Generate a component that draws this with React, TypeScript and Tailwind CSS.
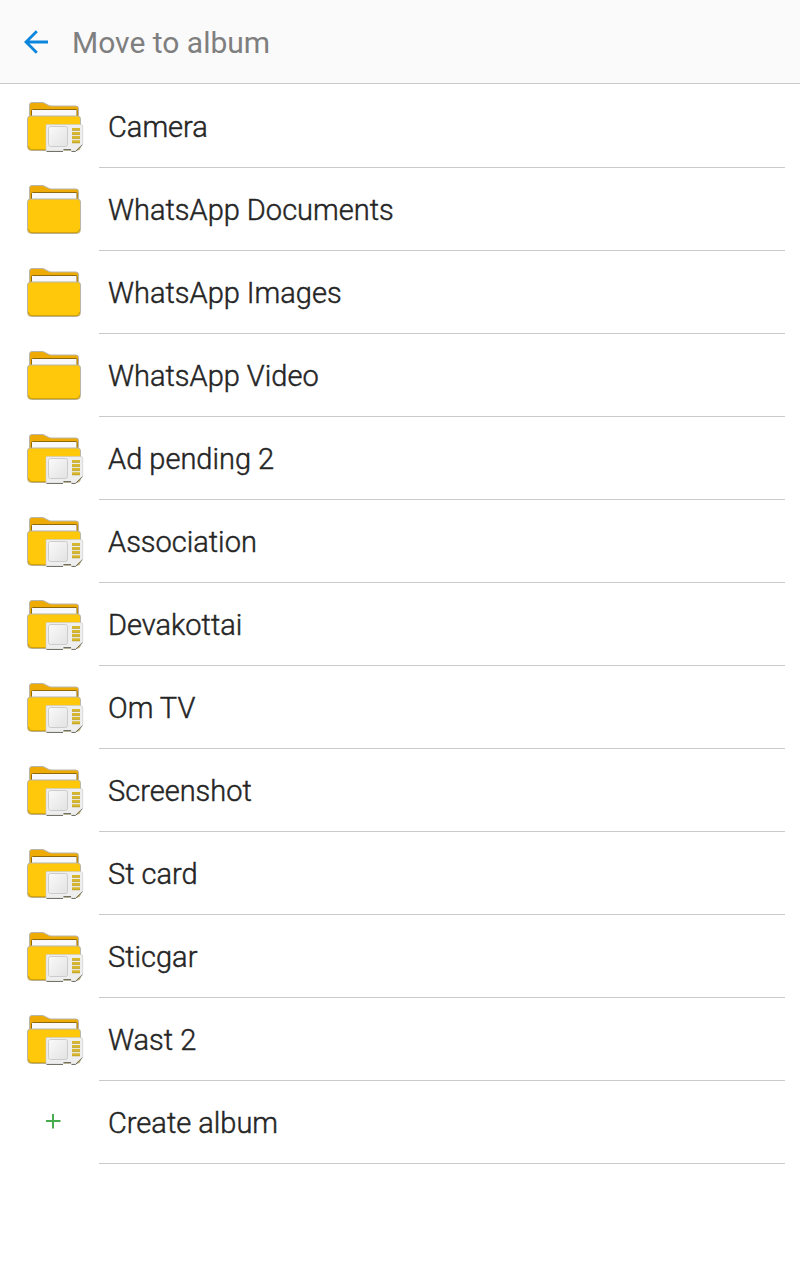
type Album = { name: string; onCard: boolean };

const albums: Album[] = [
  { name: "Camera", onCard: true },
  { name: "WhatsApp Documents", onCard: false },
  { name: "WhatsApp Images", onCard: false },
  { name: "WhatsApp Video", onCard: false },
  { name: "Ad pending 2", onCard: true },
  { name: "Association", onCard: true },
  { name: "Devakottai", onCard: true },
  { name: "Om TV", onCard: true },
  { name: "Screenshot", onCard: true },
  { name: "St card", onCard: true },
  { name: "Sticgar", onCard: true },
  { name: "Wast 2", onCard: true },
];

function FolderIcon({ onCard }: { onCard: boolean }) {
  return (
    <svg width="60" height="54" viewBox="0 0 60 54" fill="none" aria-hidden="true">
      <defs>
        <linearGradient id="card" x1="0" y1="0" x2="1" y2="1">
          <stop offset="0" stopColor="#fafafa" />
          <stop offset="1" stopColor="#e2e2e2" />
        </linearGradient>
      </defs>
      {/* back panel with tab */}
      <path d="M3.5 18V4Q3.5 1.5 6 1.5H16Q18 1.5 20 3L23 4.5Q24 5 26 5H50Q52.5 5 52.5 7.5V18Z" fill="#efab05" stroke="#b9b5a9" />
      <path d="M5.5 16V9.5Q5.5 8.5 6.5 8.5H50Q51 8.5 51 9.5V16" fill="#f9f9fb" stroke="#8f6a0b" />
      {/* front panel */}
      <path d="M4.5 15H51.5Q54.5 15 54.5 18V45.5Q54.5 49.5 50.5 49.5H5.5Q1.5 49.5 1.5 45.5V18Q1.5 15 4.5 15Z" fill="#ffc80a" stroke="#b9b5a9" />
      <path d="M2.5 45Q2.5 48.7 6 48.7H50Q53.5 48.7 53.5 45" stroke="#bc9009" strokeWidth="0.8" />
      {onCard && (
        <>
          <path d="M21 23.5H55Q56.7 23.5 56.7 25.5V43L49.5 50H45V48.7H37.5V50H21Q20 50 20 49V24.5Q20 23.5 21 23.5Z" fill="#eeeeee" stroke="#c9c9c6" strokeWidth="0.6" />
          <path d="M20.5 50.5H37M37.5 48.5H45M45.5 50.5H49.5L56.5 43.8" stroke="#67635a" strokeWidth="0.9" />
          <rect x="22.5" y="25.5" width="19" height="20" rx="2" fill="url(#card)" stroke="#cccccc" />
          <path d="M46 28.2H54M46 32.4H54M46 36.4H54M46 40.6H54" stroke="#d7b82d" strokeWidth="2.6" />
          <path d="M46 29.5H54M46 33.7H54M46 37.7H54M46 41.9H54" stroke="#a98a20" strokeWidth="0.5" />
        </>
      )}
    </svg>
  );
}

const rowClass = "flex h-[83px] items-start";
const labelClass =
  "ml-[13px] mr-[15px] flex h-full flex-1 items-center border-b border-[#cacaca] pl-[9px] pt-[2px] text-[29px] font-light leading-[34px] text-[#252525] [-webkit-text-stroke:0.45px_#252525]";

export default function App() {
  return (
    <main className="min-h-screen w-full bg-white font-['Roboto',sans-serif]">
      <header className="flex h-[84px] items-center border-b border-[#cacaca] bg-[#fafafa] pl-6">
        <svg width="24" height="24" viewBox="0 0 24 24" fill="none" stroke="#0c85dc" strokeWidth="2.8" aria-hidden="true">
          <path d="M24 12H3M12.8 1.2L2 12L12.8 22.8" />
        </svg>
        <h1 className="ml-6 pt-[2px] text-[30px] leading-[36px] text-[#7f7f7f]">Move to album</h1>
      </header>
      <ul className="pt-px">
        {albums.map((album) => (
          <li key={album.name} className={rowClass}>
            <div className="ml-[26px] mt-4 w-[60px] shrink-0">
              <FolderIcon onCard={album.onCard} />
            </div>
            <span className={labelClass}>{album.name}</span>
          </li>
        ))}
        <li className={rowClass}>
          <div className="ml-[26px] mt-[33px] flex w-[60px] shrink-0 pl-5">
            <svg width="15" height="15" viewBox="0 0 15 15" fill="#46ac4c" aria-hidden="true">
              <path d="M0 6H6V0H8V6H14.5V8H8V14.5H6V8H0Z" />
            </svg>
          </div>
          <span className={labelClass}>Create album</span>
        </li>
      </ul>
    </main>
  );
}
